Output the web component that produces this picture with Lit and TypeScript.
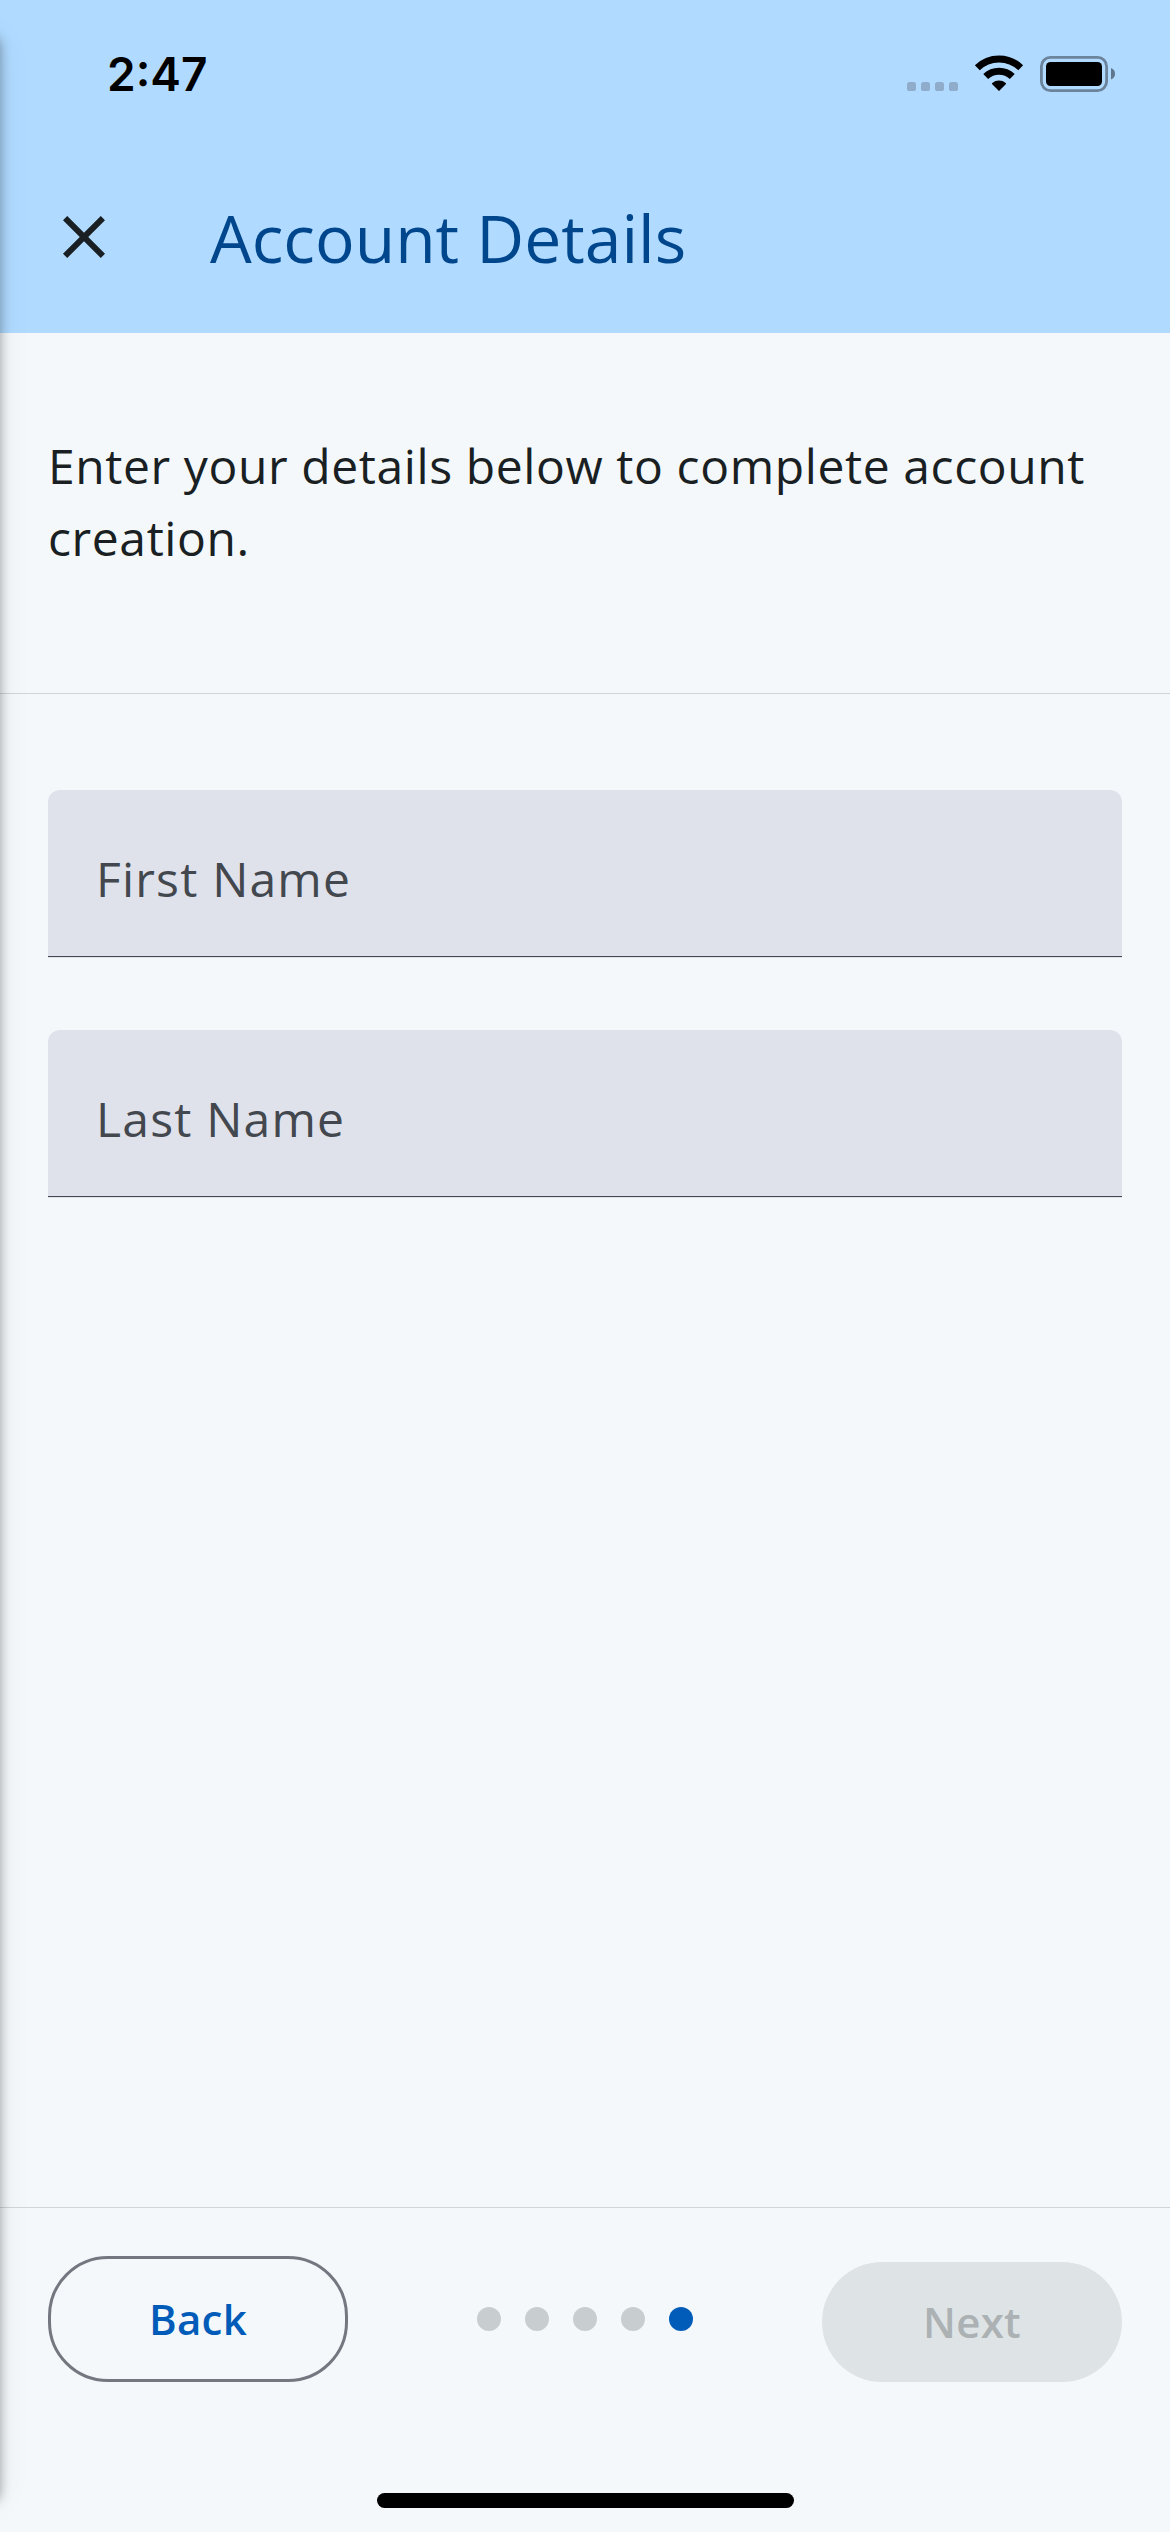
import { LitElement, html, css } from "lit";
import { customElement, property } from "lit/decorators.js";

@customElement("status-bar")
class StatusBar extends LitElement {
  static styles = css`
    :host {
      display: flex;
      justify-content: space-between;
      height: 141px;
      padding: 0 55px 0 107px;
      box-sizing: border-box;
    }
    .time {
      font: 600 46px/56px Inter, sans-serif;
      color: #000;
      padding-top: 46px;
    }
    .icons {
      display: block;
      width: 209px;
      height: 40px;
      margin-top: 54px;
    }
  `;
  render() {
    return html`
      <div class="time">2:47</div>
      <svg class="icons" viewBox="906 54 209 40">
        <g fill="#8faccb">
          <rect x="907" y="82" width="9" height="9" rx="2.6" />
          <rect x="921" y="82" width="9" height="9" rx="2.6" />
          <rect x="935" y="82" width="9" height="9" rx="2.6" />
          <rect x="949" y="82" width="9" height="9" rx="2.6" />
        </g>
        <g fill="none" stroke="#000" stroke-width="7">
          <path d="M977.3 67.8A31 31 0 0 1 1020.7 67.8" />
          <path d="M985.7 76.6A19.2 19.2 0 0 1 1012.3 76.6" />
        </g>
        <path d="M999 91L992 84Q991.6 83.4 992.3 82.9A10.4 10.4 0 0 1 1005.7 82.9Q1006.4 83.4 1006 84Z" />
        <rect x="1041.4" y="57.4" width="65.2" height="33.2" rx="9" fill="none" stroke="#6b849c" stroke-width="2.8" />
        <rect x="1046" y="62" width="56" height="24" rx="4.5" />
        <path d="M1111 68Q1115 69.500 1115 73.800Q1115 78 1111 79.600Z" fill="#5f768c" />
      </svg>
    `;
  }
}

@customElement("top-bar")
class TopBar extends LitElement {
  @property() heading = "";
  static styles = css`
    :host {
      display: flex;
      align-items: center;
      height: 192px;
      padding: 0 48px;
      gap: 90px;
      box-sizing: border-box;
    }
    .close {
      display: block;
      width: 72px;
      height: 72px;
      fill: #191f22;
    }
    .heading {
      margin: 0;
      font: 400 66px/84px "Open Sans", sans-serif;
      color: #00468c;
      white-space: nowrap;
    }
  `;
  render() {
    return html`
      <svg class="close" viewBox="0 0 24 24">
        <path d="M19 6.410 17.590 5 12 10.590 6.410 5 5 6.410 10.590 12 5 17.590 6.410 19 12 13.410 17.590 19 19 17.590 13.410 12z" />
      </svg>
      <h1 class="heading">${this.heading}</h1>
    `;
  }
}

@customElement("text-field")
class TextField extends LitElement {
  @property() label = "";
  static styles = css`
    :host {
      display: flex;
      flex-direction: column;
      height: 168px;
      box-sizing: border-box;
      border-radius: 12px 12px 0 0;
      background: #dfe2eb;
    }
    .label {
      flex: 1;
      padding: 53px 48px 0;
      font: 400 48px/72px "Open Sans", sans-serif;
      letter-spacing: 1.2px;
      color: #43474e;
    }
    .line {
      height: 1px;
      margin-bottom: 1px;
      background: #43474e;
    }
  `;
  render() {
    return html`<div class="label">${this.label}</div><div class="line"></div>`;
  }
}

@customElement("app-root")
class AppRoot extends LitElement {
  private steps = 5;
  private current = 4;

  static styles = css`
    :host {
      display: flex;
      flex-direction: column;
      position: relative;
      width: 1170px;
      height: 2532px;
      overflow: hidden;
      background: #f4f8fb;
      font-family: "Open Sans", sans-serif;
    }
    .header {
      height: 333px;
      background: #b0daff;
    }
    .intro {
      margin: 0;
      height: 360px;
      padding: 97px 48px 0;
      box-sizing: border-box;
      border-bottom: 0;
      font-size: 48px;
      line-height: 72px;
      letter-spacing: 0.6px;
      color: #191f22;
    }
    .rule {
      height: 1px;
      flex: none;
      background: #d0d5d8;
    }
    .form {
      flex: 1;
      display: flex;
      flex-direction: column;
      gap: 72px;
      padding: 96px 48px 0;
    }
    .footer {
      display: flex;
      justify-content: space-between;
      align-items: flex-end;
      height: 174px;
      padding: 0 48px;
    }
    .button {
      display: flex;
      justify-content: center;
      width: 300px;
      height: 120px;
      box-sizing: border-box;
      padding: 0;
      border: 0;
      border-radius: 60px;
      font: 600 42px/60px "Open Sans", sans-serif;
      letter-spacing: 0.3px;
      align-items: center;
    }
    .back {
      height: 126px;
      border: 3px solid #74777f;
      background: transparent;
      color: #005cb8;
    }
    .next {
      background: #dee3e6;
      color: #acb1b4;
    }
    .dots {
      display: flex;
      gap: 24px;
      padding-bottom: 51px;
    }
    .dot {
      width: 24px;
      height: 24px;
      border-radius: 50%;
      background: #c8cdd0;
    }
    .dot.on {
      background: #005cb8;
    }
    .home {
      display: flex;
      justify-content: center;
      height: 150px;
      padding-top: 111px;
      box-sizing: border-box;
    }
    .home-bar {
      width: 417px;
      height: 15px;
      border-radius: 8px;
      background: #000;
    }
    .edge {
      position: absolute;
      left: -40px;
      top: 36px;
      width: 40px;
      height: 2466px;
      border-radius: 10px;
      box-shadow: 0 0 12px rgba(0, 0, 0, 0.35), 0 0 36px rgba(0, 0, 0, 0.06);
    }
  `;

  render() {
    return html`
      <div class="header">
        <status-bar></status-bar>
        <top-bar heading="Account Details"></top-bar>
      </div>
      <p class="intro">Enter your details below to complete account creation.</p>
      <div class="rule"></div>
      <div class="form">
        <text-field label="First Name"></text-field>
        <text-field label="Last Name"></text-field>
      </div>
      <div class="rule"></div>
      <div class="footer">
        <button class="button back">Back</button>
        <div class="dots">
          ${Array.from({ length: this.steps }, (_, i) =>
            html`<span class="dot ${i === this.current ? "on" : ""}"></span>`)}
        </div>
        <button class="button next" disabled>Next</button>
      </div>
      <div class="home"><div class="home-bar"></div></div>
      <div class="edge"></div>
    `;
  }
}
